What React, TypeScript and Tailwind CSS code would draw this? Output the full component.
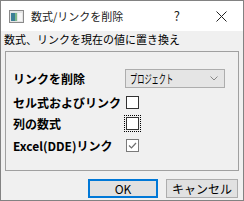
import React from "react";

const jp = "font-['Noto_Sans_CJK_JP','Noto_Sans',sans-serif]";

function Check({ checked, focus }: { checked?: boolean; focus?: boolean }) {
  const box = (
    <div
      className={`w-[13px] h-[13px] bg-white border ${checked ? "border-[#7a7a7a]" : "border-[#333333]"} flex items-center justify-center`}
    >
      {checked && (
        <svg width="11" height="11" viewBox="0 0 11 11">
          <path d="M2 5.5 L4.5 8 L9 3" stroke="#6d6d6d" strokeWidth="1.2" fill="none" />
        </svg>
      )}
    </div>
  );
  if (focus) {
    return <div className="p-px border border-dotted border-black -m-[2px]">{box}</div>;
  }
  return box;
}

export default function App() {
  return (
    <div className={`w-[244px] h-[201px] border border-[#828282] bg-[#f0f0f0] flex flex-col ${jp} text-black overflow-hidden`}>
      <div className="h-[30px] bg-white flex items-center shrink-0">
        <svg className="ml-[8px]" width="15" height="13" viewBox="0 0 15 13">
          <rect x="0.5" y="0.5" width="14" height="12" fill="#e4e4e4" stroke="#8a8a8a" />
          <rect x="2" y="3" width="4" height="8" fill="#3c7f95" />
          <rect x="6" y="3" width="2" height="8" fill="#7fb98a" />
          <rect x="9" y="3" width="4" height="8" fill="#f7f7f7" />
        </svg>
        <span className="ml-[7px] text-[11px] text-[#222]">数式/リンクを削除</span>
        <span className="ml-auto mr-[36px] text-[13px] text-[#222]">?</span>
        <svg className="mr-[16px]" width="11" height="11" viewBox="0 0 11 11">
          <path d="M0.5 0.5 L10.5 10.5 M10.5 0.5 L0.5 10.5" stroke="#222" strokeWidth="1" />
        </svg>
      </div>
      <div className="h-[17px] flex items-center pl-[3px] text-[11px] leading-none">数式、リンクを現在の値に置き換え</div>
      <div className="mt-[3px] mx-[4px] h-[120px] border border-[#a0a0a0] flex flex-col pl-[7px] text-[12px] font-bold leading-none">
        <div className="mt-[17px] h-[19px] flex items-center">
          <div className="w-[112px]">リンクを削除</div>
          <div className="w-[100px] h-[19px] bg-[#e5e5e5] border border-[#adadad] flex items-center pl-[4px] pr-[6px] font-normal">
            <span className="inline-block text-[12px] scale-x-[0.6] origin-left whitespace-nowrap text-black">プロジェクト</span>
            <svg className="ml-auto" width="8" height="5" viewBox="0 0 8 5">
              <path d="M0.5 0.5 L4 4 L7.5 0.5" stroke="#888" fill="none" strokeWidth="1" />
            </svg>
          </div>
        </div>
        <div className="mt-[8px] h-[13px] flex items-center">
          <div className="w-[113px] whitespace-nowrap">セル式およびリンク</div>
          <Check />
        </div>
        <div className="mt-[8px] h-[13px] flex items-center">
          <div className="w-[113px]">列の数式</div>
          <Check focus />
        </div>
        <div className="mt-[9px] h-[13px] flex items-center">
          <div className="w-[113px] whitespace-nowrap">Excel(DDE)リンク</div>
          <Check checked />
        </div>
      </div>
      <div className="mt-[8px] flex justify-end gap-[8px] pr-[5px]">
        <button className="w-[70px] h-[19px] border-2 border-[#0078d7] bg-[#e1e1e1] text-[12px] leading-none flex items-center justify-center">OK</button>
        <button className="w-[72px] h-[19px] border border-[#adadad] bg-[#e1e1e1] text-[12px] leading-none flex items-center justify-center">キャンセル</button>
      </div>
    </div>
  );
}
